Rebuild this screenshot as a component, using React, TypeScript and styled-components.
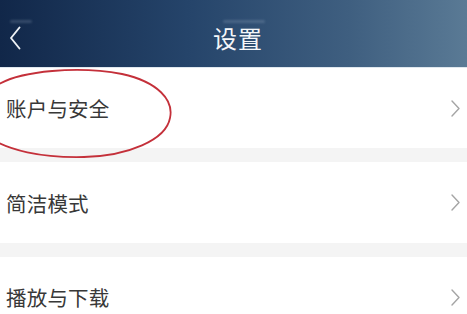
import styled, { createGlobalStyle } from 'styled-components'

const Global = createGlobalStyle`
  html, body { margin: 0; padding: 0; background: #f4f4f4; }
  body { font-family: "Noto Sans CJK SC", "Noto Sans", sans-serif; overflow: hidden; }
`

// ── Styled ────────────────────────────────────────────────
const Page = styled.div`
  width: 467px;
  height: 314px;
  display: flex;
  flex-direction: column;
  background: #f4f4f4;
  position: relative;
  overflow: hidden;
`

const Header = styled.header`
  height: 68px;
  flex-shrink: 0;
  display: grid;
  grid-template-columns: 60px 1fr 60px;
  align-items: center;
  padding-top: 8px;
  box-sizing: border-box;
  background: linear-gradient(90deg, #112749 0%, #25446a 40%, #3f5f80 75%, #5a7a95 100%);
  border-bottom: 1px solid #dfe7ee;
  position: relative;
`

const BackBtn = styled.button`
  border: none;
  background: transparent;
  padding: 0 0 0 9px;
  display: flex;
  align-items: center;
  height: 30px;
  cursor: pointer;
`

const Title = styled.h1`
  margin: 0;
  padding-left: 9px;
  text-align: center;
  color: #f4f6f9;
  font-size: 24px;
  font-weight: 400;
  letter-spacing: 1px;
`

const Smudge = styled.div<{ $left: number; $width: number }>`
  position: absolute;
  top: 20px;
  left: ${(p) => p.$left}px;
  width: ${(p) => p.$width}px;
  height: 3px;
  border-radius: 2px;
  background: rgba(190, 205, 225, 0.2);
  filter: blur(1px);
`

const List = styled.div`
  display: flex;
  flex-direction: column;
  gap: 14px;
`

const Row = styled.div<{ $height: number }>`
  height: ${(p) => p.$height}px;
  background: #fff;
  display: flex;
  align-items: center;
  justify-content: space-between;
  padding: 0 7px 0 6px;
  flex-shrink: 0;
`

const Label = styled.span`
  font-size: 20.5px;
  color: #383838;
  letter-spacing: 0.2px;
`

const Annotation = styled.svg`
  position: absolute;
  left: 0;
  top: 0;
  pointer-events: none;
`

const Chevron = ({ color = '#a5a5a5', w = 9, h = 17, sw = 1.4 }: { color?: string; w?: number; h?: number; sw?: number }) => (
  <svg width={w} height={h} viewBox={`0 0 ${w} ${h}`}>
    <path d={`M1 1 L${w - 1} ${h / 2} L1 ${h - 1}`} fill="none" stroke={color} strokeWidth={sw} strokeLinecap="round" strokeLinejoin="round" />
  </svg>
)

const items = [
  { label: '账户与安全', height: 80 },
  { label: '简洁模式', height: 81 },
  { label: '播放与下载', height: 80 },
]

// ── Component ─────────────────────────────────────────────
export default function App() {
  return (
    <>
      <Global />
      <Page>
        <Header>
          <Smudge $left={10} $width={22} />
          <Smudge $left={223} $width={42} />
          <BackBtn aria-label="返回">
            <svg width="12" height="24" viewBox="0 0 12 24">
              <path d="M10.5 1.5 L2 12 L10.5 22.5" fill="none" stroke="#eef2f6" strokeWidth="1.9" strokeLinecap="round" strokeLinejoin="round" />
            </svg>
          </BackBtn>
          <Title>设置</Title>
          <div />
        </Header>
        <List>
          {items.map((it) => (
            <Row key={it.label} $height={it.height}>
              <Label>{it.label}</Label>
              <Chevron />
            </Row>
          ))}
        </List>
        <Annotation width="467" height="314">
          <path
            d="M-4 86 C20 70 80 66 122 74 C158 82 174 100 170 118 C166 140 128 156 84 157 C40 158 8 150 -10 138"
            fill="none"
            stroke="#c4303a"
            strokeWidth="1.8"
            strokeLinecap="round"
          />
        </Annotation>
      </Page>
    </>
  )
}
